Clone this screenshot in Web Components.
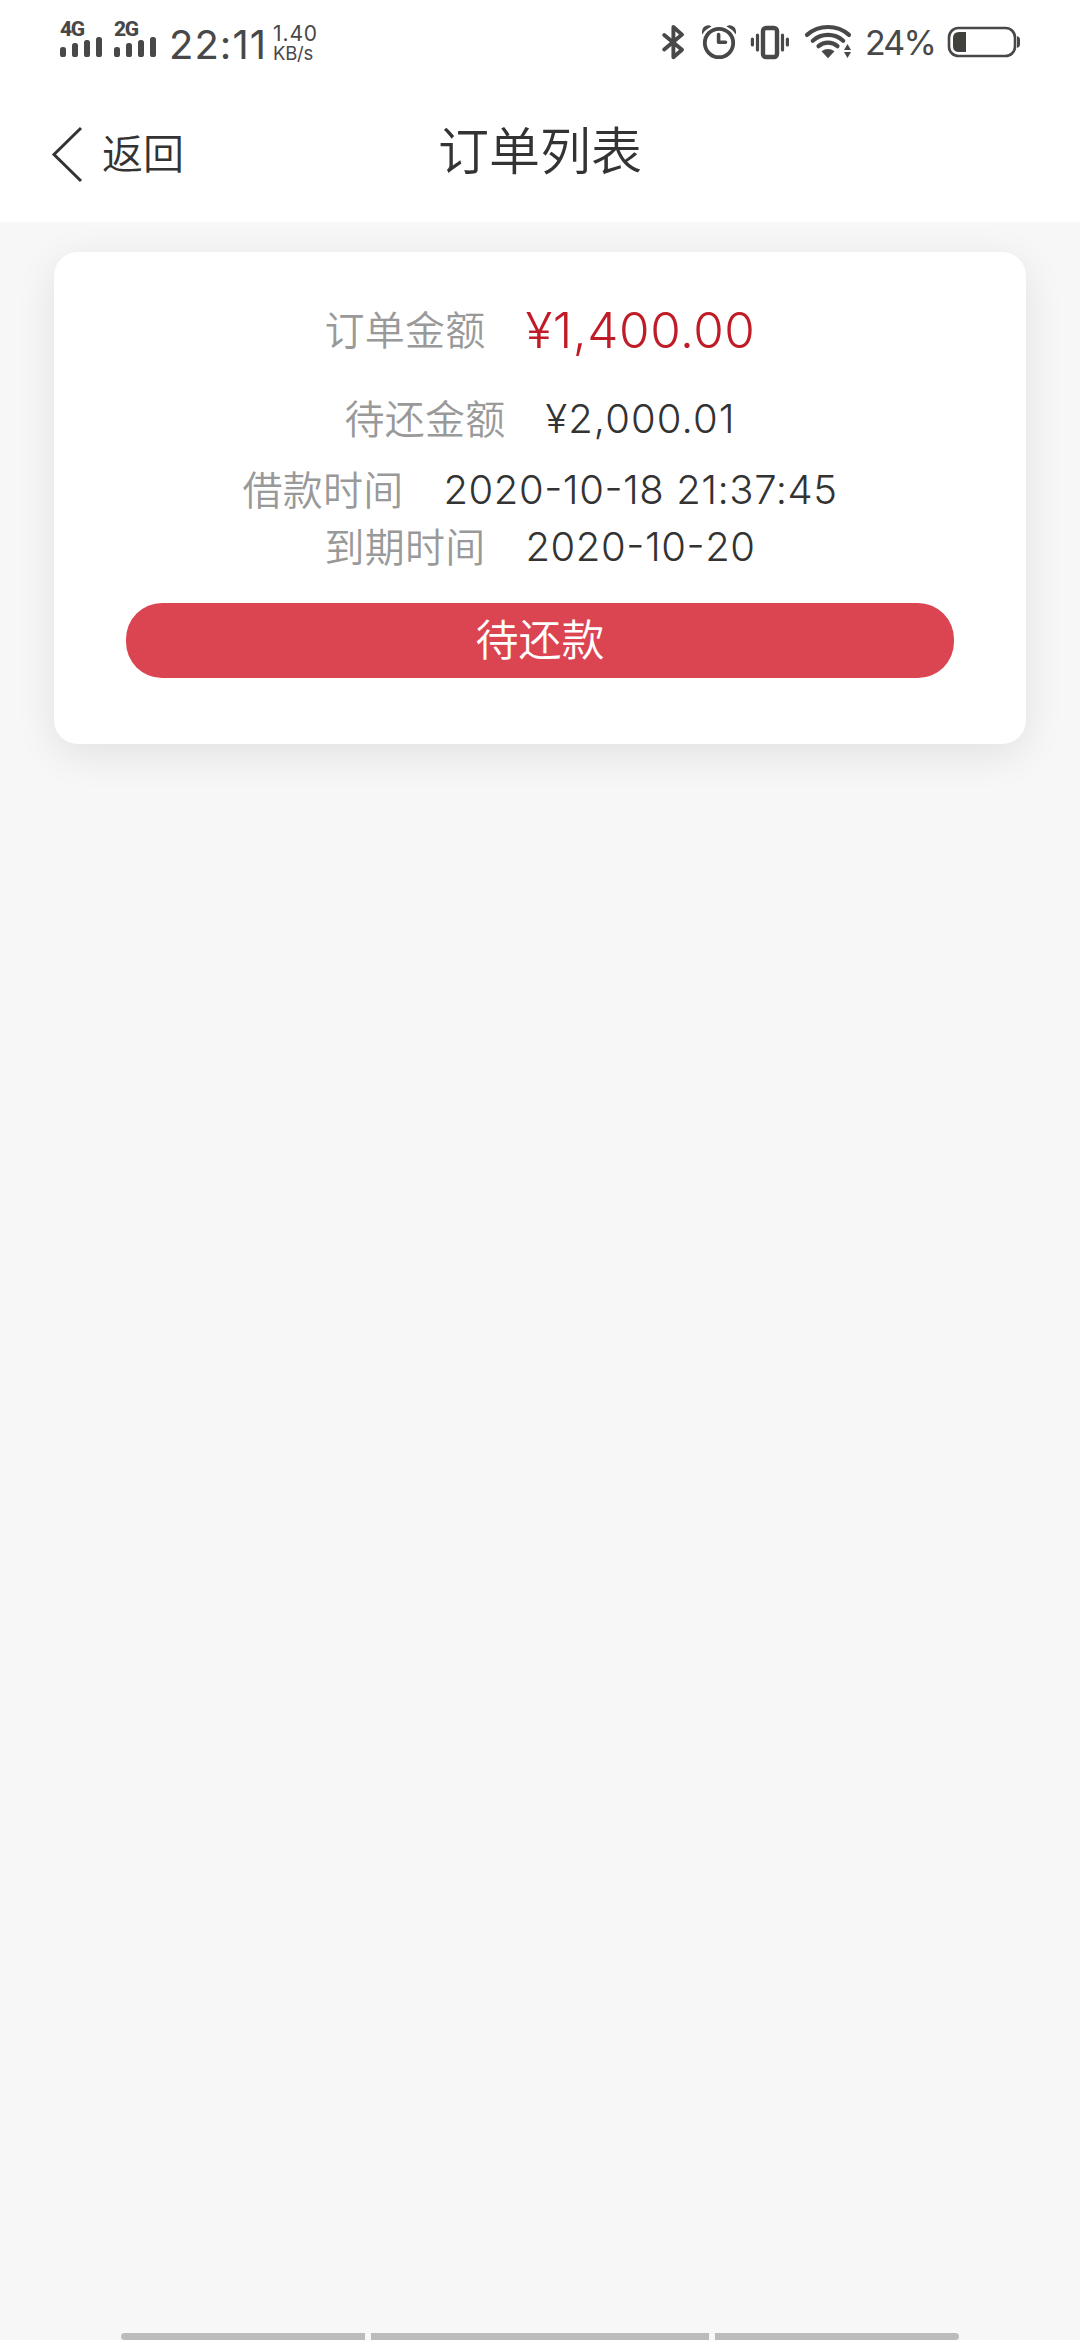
<!DOCTYPE html>
<html lang="zh-CN">
<head>
<meta charset="utf-8">
<title>订单列表</title>
<style>
html,body{margin:0;padding:0}
body{width:1080px;height:2340px;overflow:hidden;background:#f7f7f7;color:#333;font-family:Inter,"Noto Sans CJK SC",sans-serif;font-optical-sizing:none;font-variation-settings:"opsz" 14}
</style>
</head>
<body>
<order-page></order-page>
<script>
const define=(name,html,init)=>customElements.define(name,class extends HTMLElement{
  constructor(){super();this.attachShadow({mode:'open'}).innerHTML=html}
  connectedCallback(){if(init)init.call(this,this.shadowRoot)}
});

/* A single line of text whose tracking is adjusted to fill a given advance width. */
define('fit-text',`<style>
:host{display:block;flex:none;white-space:nowrap;line-height:1}
span{display:inline-block;vertical-align:top;line-height:inherit}
b{font-weight:inherit;font-feature-settings:"case"}
</style><span></span>`,function(root){
  const s=root.querySelector('span'),t=this.getAttribute('text'),w=+this.getAttribute('w');
  s.innerHTML=t.replace(/-/g,'<b>-</b>');this.style.width=w+'px';
  s.style.letterSpacing=((w-s.getBoundingClientRect().width)/t.length)+'px';
});

customElements.define('signal-bars',class extends HTMLElement{
  constructor(){super();this.attachShadow({mode:'open'}).innerHTML=`<style>
:host{display:flex;flex-direction:column;width:54px;flex:none}
fit-text{font-family:Roboto,sans-serif;line-height:15px;height:15px;font-size:21px;font-weight:800}
svg{display:block}
</style><fit-text w="23.5" text="${this.getAttribute('net')}"></fit-text>
<svg width="44" height="20" viewBox="0 0 44 20" fill="#484848"><rect y="10" width="6" height="10" rx="2.6"/><rect x="12" y="6" width="6" height="14" rx="2.6"/><rect x="24" y="3" width="6" height="17" rx="2.6"/><rect x="36" y="0" width="6" height="20" rx="2.6"/></svg>`}
});

define('status-bar',`<style>
:host{display:flex;justify-content:space-between;height:82px;box-sizing:border-box;color:#484848}
.left,.right{display:flex;align-items:flex-start}
.left{padding-left:60px}
.right{padding-right:59px}
.time{font-size:40px;line-height:30px;margin:29.5px 0 0 1px}
.speed{display:flex;flex-direction:column;margin:25px 0 0 6px}
.rate{font-size:21px;line-height:17px}
.unit{font-size:18.5px;line-height:15px;margin-top:4px}
signal-bars{margin-top:22px}
.pct{font-size:34px;line-height:26px;margin:30px 12px 0 0}
svg{display:block}
</style>
<div class="left"><signal-bars net="4G"></signal-bars><signal-bars net="2G"></signal-bars>
<fit-text class="time" text="22:11" w="98"></fit-text>
<div class="speed"><fit-text class="rate" text="1.40" w="45"></fit-text><fit-text class="unit" text="KB/s" w="40"></fit-text></div></div>
<div class="right">
<svg width="205" height="70" viewBox="660 0 205 70" fill="none" stroke="#484848" stroke-linecap="round" stroke-linejoin="round">
<path stroke-width="3.9" d="M664.2 35 682 49.8 673.4 57.2V27L682 34.6 664.2 49.4"/>
<circle cx="719" cy="43" r="14.2" stroke-width="3.8"/>
<path stroke-width="3.6" d="M718.6 34.5V42.3H725.5"/>
<path fill="#484848" stroke="none" d="M702.3 34.5Q701 28 705.5 26Q709 24.5 711.5 26.5Q705 29.5 702.3 34.5ZM735.7 34.5Q737 28 732.5 26Q729 24.5 726.5 26.5Q733 29.5 735.7 34.5Z"/>
<rect x="763" y="28" width="14" height="29" rx="3" stroke-width="4.4"/>
<path stroke-width="3.2" d="M757.5 35V50M782.5 35V50M752.4 39V45M787.4 39V45"/>
<path stroke-width="4.2" d="M807 34.8C819 24.4 837 24.4 849 34.8M812.8 40.8C821.5 33 834.5 33 843.2 40.8M818.5 46.2C824 41.5 832 41.5 837.5 46.2"/>
<path fill="#484848" stroke="none" d="M821.5 51.2Q828 46.8 834.5 51.2L828 58.2ZM844 50 847.5 44 851 50ZM844 52 847.5 58 851 52Z"/>
</svg>
<fit-text class="pct" text="24%" w="70"></fit-text>
<svg width="74" height="70" viewBox="947 0 74 70"><rect x="949" y="28" width="66" height="28" rx="9.5" fill="none" stroke="#484848" stroke-width="2.6"/><path fill="#3f413c" d="M966 32V52H959Q953 52 953 46V38Q953 32 959 32Z"/><path fill="#484848" d="M1017 36Q1020 37 1020 39V45Q1020 47 1017 48Z"/></svg>
</div>`);

define('nav-header',`<style>
:host{display:grid;grid-template-columns:438px auto 438px;height:140px}
.back{display:flex;align-items:flex-start;padding-left:50px}
svg{display:block;margin-top:42px}
.lbl{font-size:41px;line-height:60px;margin:42px 0 0 16px;font-weight:350}
.title{font-size:51px;line-height:60px;margin-top:40px;font-weight:350}
</style><div class="back"><svg width="36" height="60" viewBox="50 124 36 60" fill="none" stroke="#333" stroke-width="3"><path d="M81 128 54 154.5 81 181"/></svg><fit-text class="lbl" text="返回" w="82"></fit-text></div>
<fit-text class="title" text="订单列表" w="204"></fit-text>`);

customElements.define('order-field',class extends HTMLElement{
  constructor(){super();const a=n=>this.getAttribute(n);this.attachShadow({mode:'open'}).innerHTML=`<style>
:host{display:flex;justify-content:center;gap:40px;font-size:40px}
fit-text{line-height:var(--row,56px);font-weight:350;font-feature-settings:"calt" 0}
.l{color:#999;padding-top:1px}
.v{font-size:var(--size,40px)}
</style><fit-text class="l" text="${a('label')}" w="161"></fit-text><fit-text class="v" text="${a('value')}" w="${a('w')}"></fit-text>`}
});

define('pill-button',`<style>
:host{display:flex;justify-content:center;align-items:center;height:75px;border-radius:36px;background:#db4551;color:#fff}
fit-text{font-size:43px;line-height:75px;font-weight:350}
</style><fit-text text="待还款" w="129"></fit-text>`);

define('order-card',`<style>
:host{display:block;height:492px;box-sizing:border-box;padding:48px 72px 0;margin:30px 54px 0;border-radius:24px;background:#fff;box-shadow:0 10px 40px rgba(0,0,0,.09)}
</style><slot></slot>`);

define('gesture-bar',`<style>
:host{display:flex;gap:6px;padding:0 121px;height:7px}
i{background:#bbb;width:244px}
i:nth-of-type(2){flex:1}
i:first-of-type{border-radius:4px 0 0 4px}
i:last-of-type{border-radius:0 4px 4px 0}
</style><i></i><i></i><i></i>`);

define('order-page',`<style>
:host{display:flex;flex-direction:column;height:2340px}
.top{background:#fff}
main{flex:1}
order-field{height:56px}
.a{height:60px;--size:49.5px;--row:60px;color:#c01c28}
.b{height:60px;--row:60px;margin-top:29px}
.c{margin-top:13px}
.d{margin-top:1px}
pill-button{margin-top:28px}
</style><div class="top"><status-bar></status-bar><nav-header></nav-header></div>
<main><order-card>
<order-field class="a" label="订单金额" value="¥1,400.00" w="230"></order-field>
<order-field class="b" label="待还金额" value="¥2,000.01" w="190"></order-field>
<order-field class="c" label="借款时间" value="2020-10-18 21:37:45" w="394"></order-field>
<order-field class="d" label="到期时间" value="2020-10-20" w="230"></order-field>
<pill-button></pill-button>
</order-card></main><gesture-bar></gesture-bar>`);
</script>
</body>
</html>
